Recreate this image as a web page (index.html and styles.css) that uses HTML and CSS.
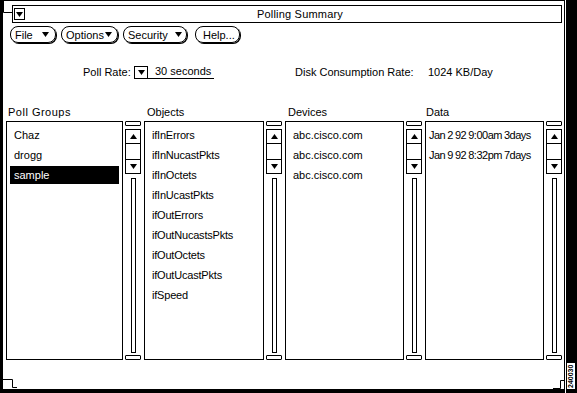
FILE: index.html
```html
<!DOCTYPE html>
<html>
<head>
<meta charset="utf-8">
<link rel="stylesheet" href="styles.css">
</head>
<body>
<div class="frame">
  <div class="win">
    <div class="titlebar">
      <span class="wmbtn"><svg width="7" height="5" viewBox="0 0 7 5"><polygon points="0,0 7,0 3.5,5" fill="#000"/></svg></span>
      <span class="title">Polling Summary</span>
    </div>
    <div class="menubar">
      <span class="pill p-file">File <svg class="tri" width="7" height="5" viewBox="0 0 7 5"><polygon points="0,0 7,0 3.5,5" fill="#000"/></svg></span>
      <span class="pill p-opt">Options<svg class="tri" width="7" height="5" viewBox="0 0 7 5"><polygon points="0,0 7,0 3.5,5" fill="#000"/></svg></span>
      <span class="pill p-sec">Security <svg class="tri" width="7" height="5" viewBox="0 0 7 5"><polygon points="0,0 7,0 3.5,5" fill="#000"/></svg></span>
      <span class="pill p-help">Help...</span>
    </div>
    <div class="rates">
      <span class="lbl poll">Poll Rate:</span>
      <span class="dd">
        <span class="ddbox"><svg width="7" height="5" viewBox="0 0 7 5"><polygon points="0,0 7,0 3.5,5" fill="#000"/></svg></span>
        <span class="ddval">30 seconds</span>
      </span>
      <span class="lbl disk">Disk Consumption Rate:</span>
      <span class="lbl">1024 KB/Day</span>
    </div>
    <div class="panes">
      <div class="pane pg">
        <div class="hdr wide">Poll Groups</div>
        <div class="pbody">
          <div class="list">
            <div class="item">Chaz</div>
            <div class="item">drogg</div>
            <div class="item sel">sample</div>
          </div>
          <div class="sb">
            <div class="cap"></div>
            <div class="btns">
              <div class="cell"><svg width="7" height="5" viewBox="0 0 7 5"><polygon points="0,5 7,5 3.5,0" fill="#000"/></svg></div>
              <div class="cell mid"></div>
              <div class="cell"><svg width="7" height="5" viewBox="0 0 7 5"><polygon points="0,0 7,0 3.5,5" fill="#000"/></svg></div>
            </div>
            <div class="trough"></div>
            <div class="cap bot"></div>
          </div>
        </div>
      </div>
      <div class="pane obj">
        <div class="hdr">Objects</div>
        <div class="pbody">
          <div class="list">
            <div class="item">ifInErrors</div>
            <div class="item">ifInNucastPkts</div>
            <div class="item">ifInOctets</div>
            <div class="item">ifInUcastPkts</div>
            <div class="item">ifOutErrors</div>
            <div class="item">ifOutNucastsPkts</div>
            <div class="item">ifOutOctets</div>
            <div class="item">ifOutUcastPkts</div>
            <div class="item">ifSpeed</div>
          </div>
          <div class="sb">
            <div class="cap"></div>
            <div class="btns">
              <div class="cell"><svg width="7" height="5" viewBox="0 0 7 5"><polygon points="0,5 7,5 3.5,0" fill="#000"/></svg></div>
              <div class="cell mid"></div>
              <div class="cell"><svg width="7" height="5" viewBox="0 0 7 5"><polygon points="0,0 7,0 3.5,5" fill="#000"/></svg></div>
            </div>
            <div class="trough"></div>
            <div class="cap bot"></div>
          </div>
        </div>
      </div>
      <div class="pane dev">
        <div class="hdr">Devices</div>
        <div class="pbody">
          <div class="list">
            <div class="item">abc.cisco.com</div>
            <div class="item">abc.cisco.com</div>
            <div class="item">abc.cisco.com</div>
          </div>
          <div class="sb">
            <div class="cap"></div>
            <div class="btns">
              <div class="cell"><svg width="7" height="5" viewBox="0 0 7 5"><polygon points="0,5 7,5 3.5,0" fill="#000"/></svg></div>
              <div class="cell mid"></div>
              <div class="cell"><svg width="7" height="5" viewBox="0 0 7 5"><polygon points="0,0 7,0 3.5,5" fill="#000"/></svg></div>
            </div>
            <div class="trough"></div>
            <div class="cap bot"></div>
          </div>
        </div>
      </div>
      <div class="pane data">
        <div class="hdr tight">Data</div>
        <div class="pbody">
          <div class="list">
            <div class="item">Jan 2 92 9:00am 3days</div>
            <div class="item">Jan 9 92 8:32pm 7days</div>
          </div>
          <div class="sb">
            <div class="cap"></div>
            <div class="btns">
              <div class="cell"><svg width="7" height="5" viewBox="0 0 7 5"><polygon points="0,5 7,5 3.5,0" fill="#000"/></svg></div>
              <div class="cell mid"></div>
              <div class="cell"><svg width="7" height="5" viewBox="0 0 7 5"><polygon points="0,0 7,0 3.5,5" fill="#000"/></svg></div>
            </div>
            <div class="trough"></div>
            <div class="cap bot"></div>
          </div>
        </div>
      </div>
    </div>
  </div>
  <div class="edge"><span class="fig">240030</span></div>
  <svg class="corner c-tl" width="12" height="16" viewBox="0 0 12 16"><path d="M0.5,0 V12.5 H9" fill="none" stroke="#000"/></svg>
  <svg class="corner c-bl" width="14" height="12" viewBox="0 0 14 12"><path d="M0,0.5 H9.5 V8.5 H14" fill="none" stroke="#000"/></svg>
  <svg class="corner c-br" width="12" height="12" viewBox="0 0 12 12"><path d="M0,8.5 H7.5 V0.5 H12" fill="none" stroke="#000"/></svg>
</div>
</body>
</html>
```

FILE: styles.css
```css
* { box-sizing: border-box; }
html, body { margin: 0; padding: 0; background: #fff; }
body {
  font-family: "Liberation Sans", Arial, sans-serif;
  font-size: 11px;
  color: #000;
}
.frame {
  position: relative;
  width: 577px;
  height: 393px;
  display: flex;
  background: #fff;
  overflow: hidden;
}
.win {
  width: 565px;
  height: 393px;
  border-left: 3px solid #000;
  border-top: 1px solid #000;
  border-bottom: 4px solid #000;
  border-right: 1px solid #000;
  display: flex;
  flex-direction: column;
}
.edge {
  width: 11px;
  margin-left: 1px;
  background: #000;
  position: relative;
}
.fig {
  position: absolute;
  left: 1px;
  bottom: 4px;
  width: 8px;
  height: 26px;
  background: #fff;
  font-size: 7px;
  line-height: 8px;
  writing-mode: vertical-rl;
  transform: rotate(180deg);
  text-align: center;
  font-weight: bold;
}
.corner { position: absolute; }
.c-tl { left: 3px; top: 0; }
.c-bl { left: 3px; top: 379px; }
.c-br { left: 553px; top: 380px; }

/* title bar */
.titlebar {
  margin: 4px 2px 0 9px;
  height: 18px;
  border: 1px solid #000;
  display: flex;
  align-items: center;
}
.wmbtn {
  margin-left: 1px;
  width: 11px;
  height: 12px;
  border: 1px solid #000;
  display: flex;
  align-items: center;
  justify-content: center;
}
.title {
  flex: 1;
  text-align: center;
  padding-left: 14px;
  letter-spacing: 0.2px;
}

/* menu buttons */
.menubar {
  display: flex;
  margin: 3px 0 0 7px;
  height: 18px;
}
.pill {
  height: 17px;
  border: 1px solid #000;
  border-radius: 8px;
  box-shadow: 1px 1px 0 #000;
  display: flex;
  align-items: center;
  padding-left: 4px;
  white-space: pre;
}
.pill .tri { margin-left: 1px; }
.p-file { width: 46px; }
.p-file .tri { margin-left: 6px; }
.p-opt { width: 57px; margin-left: 5px; }
.p-sec { width: 64px; margin-left: 5px; }
.p-sec .tri { margin-left: 4px; }
.p-help { width: 45px; margin-left: 8px; padding-left: 7px; }

/* rates */
.rates {
  display: flex;
  align-items: center;
  margin-top: 21px;
  height: 14px;
}
.poll { margin-left: 80px; width: 51px; }
.dd { display: flex; align-items: flex-end; height: 14px; }
.ddbox {
  width: 14px;
  height: 13px;
  border: 1px solid #000;
  display: flex;
  align-items: center;
  justify-content: center;
}
.ddval {
  width: 66px;
  height: 14px;
  border-bottom: 1px solid #000;
  padding-left: 7px;
  line-height: 12px;
}
.disk { margin-left: 81px; width: 133px; }

/* panes */
.panes {
  display: flex;
  margin: 26px 0 0 3px;
  gap: 3px;
}
.pane { display: flex; flex-direction: column; }
.hdr {
  height: 16px;
  line-height: 14px;
  padding-left: 3px;
}
.hdr.wide { padding-left: 2px; letter-spacing: 0.5px; }
.hdr.tight { padding-left: 1px; }
.pbody { display: flex; gap: 2px; height: 239px; }
.list {
  border: 1px solid #000;
  padding: 4px 3px 0 3px;
  display: flex;
  flex-direction: column;
  gap: 2px;
}
.pg .list { width: 117px; }
.obj .list { width: 120px; }
.dev .list { width: 119px; }
.data .list { width: 119px; padding-left: 2px; }
.item {
  height: 18px;
  line-height: 18px;
  padding-left: 4px;
  white-space: nowrap;
}
.obj .item { letter-spacing: -0.2px; }
.data .item { padding-left: 1px; letter-spacing: -0.5px; word-spacing: -0.5px; }
.item.sel { background: #000; color: #fff; }

/* scrollbar */
.sb {
  width: 16px;
  display: flex;
  flex-direction: column;
  align-items: center;
}
.cap {
  width: 16px;
  height: 5px;
  border: 1px solid #000;
  border-radius: 1px;
}
.btns {
  margin-top: 3px;
  width: 16px;
  height: 45px;
  border: 1px solid #000;
  display: flex;
  flex-direction: column;
}
.cell {
  height: 13px;
  display: flex;
  align-items: center;
  justify-content: center;
}
.cell.mid {
  height: 17px;
  border-top: 1px solid #000;
  border-bottom: 1px solid #000;
}
.trough {
  margin-top: 4px;
  width: 5px;
  flex: 1;
  border: 1px solid #000;
}
.cap.bot { margin-top: 2px; }
```
